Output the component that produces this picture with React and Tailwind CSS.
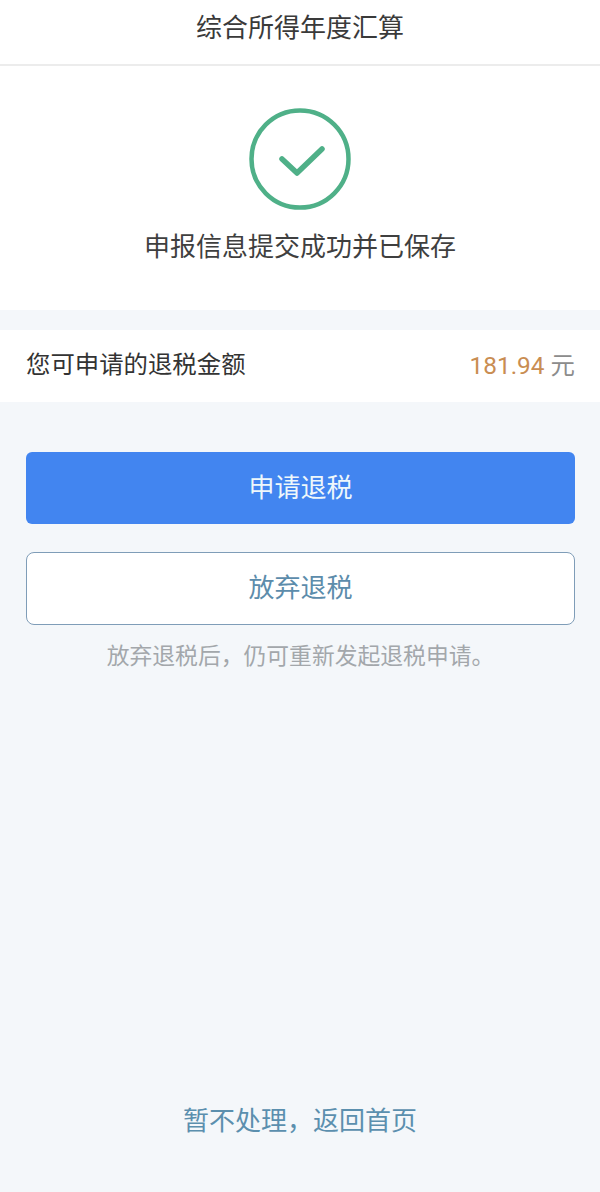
const fontStack = { fontFamily: '"Roboto", "Noto Sans CJK SC", sans-serif' };

const App = () => {
  return (
    <div style={fontStack} className="flex flex-col h-[1192px] w-[600px] bg-[#f4f7fa] overflow-hidden">
      <div className="bg-white h-[66px] pb-[7px] border-b-2 border-[#ececec] flex items-center justify-center text-[26px] text-[#3a3a3a]">
        综合所得年度汇算
      </div>

      <div className="bg-white h-[244px] flex flex-col items-center pt-[41px]">
        <svg width="104" height="104" viewBox="0 0 104 104" fill="none">
          <circle cx="52" cy="52" r="48.5" stroke="#4fb088" strokeWidth="4.5" />
          <path d="M34 52 L49 66 L74 42" stroke="#4fb088" strokeWidth="5.5" strokeLinecap="round" strokeLinejoin="round" />
        </svg>
        <div className="mt-[17px] text-[26px] leading-[38px] text-[#3f3f3f]">申报信息提交成功并已保存</div>
      </div>

      <div className="mt-[20px] bg-white h-[72px] pl-[26px] pr-[25px] flex items-center justify-between">
        <span className="text-[24.4px] leading-[34px] pb-[2px] text-[#333333]">您可申请的退税金额</span>
        <span className="text-[24.4px] text-[#8c8c8c]">
          <span className="text-[#c98d52]">181.94</span> 元
        </span>
      </div>

      <div className="flex flex-col pl-[26px] pr-[25px] pt-[50px]">
        <button className="h-[72px] w-full rounded-[6px] bg-[#4285f0] text-[26px] text-[#eef7fb]">申请退税</button>
        <button className="mt-[28px] h-[73px] w-full rounded-[8px] bg-white border border-[#7f9db8] text-[26px] text-[#5c8cab]">放弃退税</button>
        <p className="mt-[15px] text-center text-[22.8px] leading-[34px] text-[#a3a7ab]">放弃退税后，仍可重新发起退税申请。</p>
      </div>

      <div className="mt-auto pb-[52px] text-center text-[26px] leading-[38px] text-[#5b8fae]">暂不处理，返回首页</div>
    </div>
  );
};

export default App;
